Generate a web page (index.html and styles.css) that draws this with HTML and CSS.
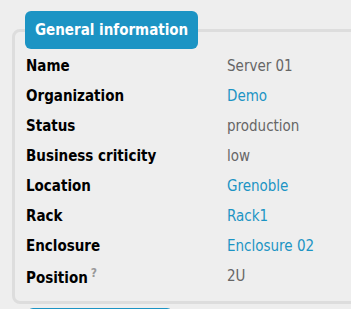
FILE: index.html
```html
<!DOCTYPE html>
<html lang="en">
<head>
    <meta charset="utf-8">
    <title>Server 01</title>
    <link rel="stylesheet" href="styles.css">
</head>
<body>
<div class="details">
    <fieldset class="panel">
        <legend>General information</legend>
        <dl class="props">
            <div class="prop"><dt>Name</dt><dd>Server 01</dd></div>
            <div class="prop"><dt>Organization</dt><dd><a href="#">Demo</a></dd></div>
            <div class="prop"><dt>Status</dt><dd>production</dd></div>
            <div class="prop"><dt>Business criticity</dt><dd>low</dd></div>
            <div class="prop"><dt>Location</dt><dd><a href="#">Grenoble</a></dd></div>
            <div class="prop"><dt>Rack</dt><dd><a href="#">Rack1</a></dd></div>
            <div class="prop"><dt>Enclosure</dt><dd><a href="#">Enclosure 02</a></dd></div>
            <div class="prop"><dt>Position<sup class="help">?</sup></dt><dd>2U</dd></div>
        </dl>
    </fieldset>
    <fieldset class="panel panel-next">
        <legend>Date</legend>
    </fieldset>
</div>
</body>
</html>
```

FILE: styles.css
```css
body {
    margin: 0;
    background: #eeeeee;
    font: 15px Tahoma, "DejaVu Sans Condensed", "DejaVu Sans", sans-serif;
    overflow: hidden;
}

.details {
    width: 420px;
    padding: 11px 0 0 12px;
}

.panel {
    margin: 0 0 4px 0;
    padding: 0 10px 10px 10px;
    border: 3px solid #dddddd;
    border-radius: 8px;
}

.panel legend {
    padding: 0 10px;
    height: 38px;
    line-height: 38px;
    color: #fff;
    font-weight: bold;
    font-size: 15px;
    background: #1c94c4;
    border-radius: 6px;
}

.panel-next legend {
    margin-left: 2px;
    width: 126px;
}

.props {
    margin: 0;
    padding-top: 2px;
}

.prop {
    display: flex;
    height: 30px;
    align-items: center;
}

.prop dt {
    width: 201px;
    padding-left: 1px;
    font-weight: bold;
    color: #000;
}

.prop dd {
    margin: 0;
    color: #666;
}

.prop a {
    color: #1c94c4;
    text-decoration: none;
}

.help {
    margin-left: 3px;
    font-size: 12px;
    font-weight: bold;
    color: #999;
}
```
